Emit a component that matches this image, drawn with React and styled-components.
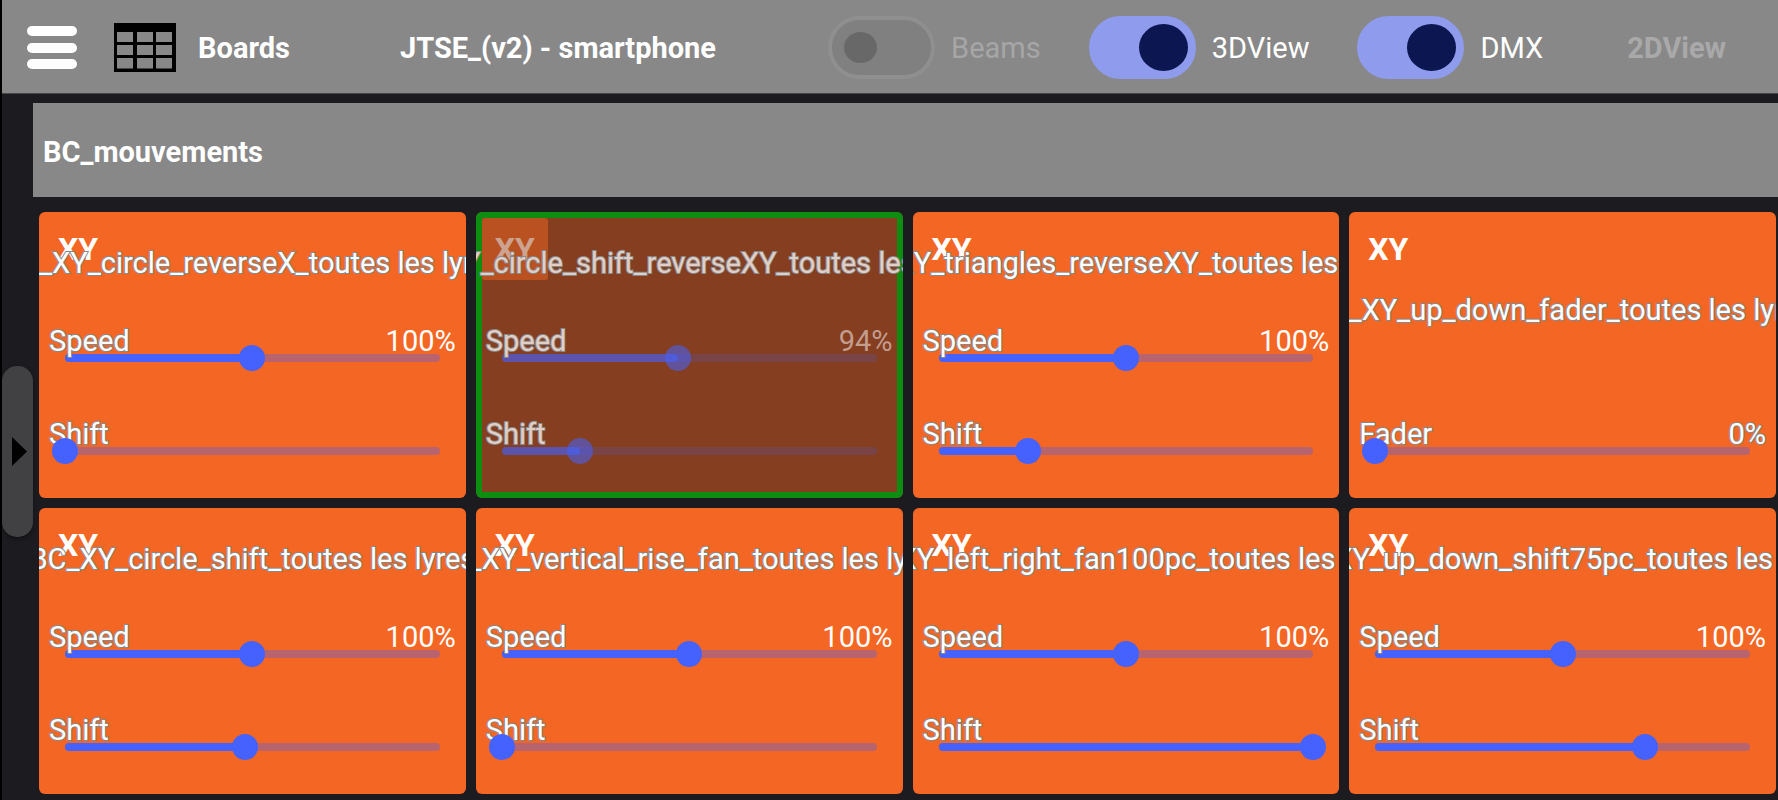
import React, { useId, useState } from "react";
import styled, { createGlobalStyle, css } from "styled-components";

const GlobalStyle = createGlobalStyle`
  * { box-sizing: border-box; }
  body {
    margin: 0;
    background: #1c1b20;
    color: #fff;
    font-family: Roboto, "Liberation Sans", sans-serif;
    font-size: 29px;
    line-height: 34px;
  }
  button, input { font: inherit; color: inherit; margin: 0; }
`;

const Page = styled.div`
  display: flex;
  flex-direction: column;
  min-height: 100vh;
  border-left: 2px solid #000;
  overflow: hidden;
`;

const TopBar = styled.header`
  display: flex;
  align-items: center;
  height: 94px;
  padding: 2px 52px 0 25px;
  background: #888;
  border-bottom: 1px solid #48484a;
  white-space: nowrap;
`;

const BarButton = styled.button`
  display: flex;
  align-items: center;
  gap: 22px;
  padding: 0;
  border: 0;
  background: none;
  font-weight: 700;
  cursor: pointer;

  &:disabled {
    color: #a9a9a9;
    cursor: default;
  }
`;

const BoardsButton = styled(BarButton)`
  margin-left: 37px;
`;

const ProjectName = styled.h1`
  margin: 0 0 0 110px;
  font-size: inherit;
  font-weight: 700;
`;

const Controls = styled.div`
  display: flex;
  align-items: center;
  gap: 48px;
  margin-left: auto;
`;

const View2D = styled(BarButton)`
  margin-left: 36px;
`;

const SwitchLabel = styled.label`
  display: flex;
  align-items: center;
  gap: 16px;
  color: ${(p) => (p.$off ? "#a6a6a6" : "#fff")};
`;

const SwitchInput = styled.input`
  appearance: none;
  display: flex;
  align-items: center;
  justify-content: flex-start;
  width: 107px;
  height: 63px;
  padding: 0 12px;
  border: 4px solid #8f8f8f;
  border-radius: 32px;
  background: #808080;

  &::before {
    content: "";
    width: 33px;
    height: 31px;
    border-radius: 50%;
    background: #686868;
  }

  &:checked {
    justify-content: flex-end;
    padding: 0 4px;
    border-color: #8f9bec;
    background: #8f9bec;
  }

  &:checked::before {
    width: 49px;
    height: 47px;
    background: #0c1752;
  }
`;

const Body = styled.div`
  display: flex;
  flex: 1;
  padding-top: 9px;
`;

const Rail = styled.aside`
  display: flex;
  align-items: center;
  flex: 0 0 31px;
`;

const RailHandle = styled.button`
  display: flex;
  align-items: center;
  justify-content: center;
  width: 31px;
  height: 171px;
  padding: 0 0 0 3px;
  border: 0;
  border-radius: 15px;
  background: #414143;
  box-shadow: 0 2px 4px rgba(0, 0, 0, 0.4);
`;

const Board = styled.main`
  flex: 1;
  min-width: 0;
`;

const BoardName = styled.h2`
  display: flex;
  align-items: center;
  height: 94px;
  margin: 0 0 15px;
  padding: 3px 10px 0;
  background: #888;
  font-size: inherit;
  font-weight: 700;
`;

const CardGrid = styled.div`
  display: grid;
  grid-template-columns: repeat(4, minmax(0, 1fr));
  gap: 10px;
  padding: 0 2px 6px 6px;
`;

const outlined = css`
  -webkit-text-stroke: 2px #84898c;
  paint-order: stroke fill;
`;

const Card = styled.section`
  --fg: ${(p) => (p.$active ? "#e3cec6" : "#fff")};
  --value: ${(p) => (p.$active ? "#c39d8e" : "#fff")};
  --icon: ${(p) => (p.$active ? "#cda28f" : "#fff")};
  --bar: ${(p) => (p.$active ? "rgba(69, 98, 255, 0.55)" : "#4562ff")};
  --rest: rgba(69, 98, 255, ${(p) => (p.$active ? 0.18 : 0.35)});
  display: flex;
  flex-direction: column;
  min-height: 286px;
  border-radius: 6px;
  overflow: hidden;
  background: ${(p) => (p.$active ? "#853e20" : "#f46623")};
  box-shadow: ${(p) => (p.$active ? "inset 0 0 0 6px #0e8e11" : "none")};
`;

const CardHead = styled.div`
  display: grid;
  flex: 1;
  min-height: 100px;
  padding-top: 2px;

  > * { grid-area: 1 / 1; }
`;

const Kind = styled.span`
  display: flex;
  align-items: center;
  justify-content: center;
  width: 66px;
  height: 62px;
  margin: 4px 6px;
  border-radius: 3px;
  background: ${(p) => (p.$active ? "#b95120" : "transparent")};
  color: var(--icon);
  font-size: 32px;
  font-weight: 700;
`;

const CardTitle = styled.h3`
  display: flex;
  align-items: center;
  justify-content: center;
  min-width: 0;
  margin: 0;
  color: var(--fg);
  font-size: inherit;
  font-weight: 400;
  white-space: nowrap;
  ${outlined}
`;

const SliderRow = styled.div`
  display: grid;
  height: 93px;
  padding-top: 12px;
  align-items: start;

  > * { grid-area: 1 / 1; }
`;

const Track = styled.div`
  height: 8px;
  margin: 30px 26px 0;
  border-radius: 4px;
  background: var(--rest);
`;

const Fill = styled.div`
  height: 8px;
  border-radius: 4px;
  background: var(--bar);
`;

const Caption = styled.div`
  display: flex;
  justify-content: space-between;
  padding: 0 10px;
`;

const Name = styled.label`
  color: var(--fg);
  ${outlined}
`;

const Value = styled.output`
  color: var(--value);
  ${(p) => p.$outlined && outlined}
`;

const Range = styled.input`
  appearance: none;
  width: auto;
  height: 26px;
  margin: 21px 13px 0;
  background: transparent;

  &::-webkit-slider-thumb {
    appearance: none;
    width: 26px;
    height: 26px;
    border-radius: 50%;
    background: var(--bar);
  }
`;

const MenuIcon = () => (
  <svg width="50" height="44" viewBox="0 0 50 44" aria-hidden="true">
    <g fill="#fff">
      <rect y="0" width="50" height="10" rx="5" />
      <rect y="17" width="50" height="10" rx="5" />
      <rect y="33" width="50" height="10" rx="5" />
    </g>
  </svg>
);

const TableIcon = () => (
  <svg width="62" height="49" viewBox="0 0 62 49" aria-hidden="true">
    <path
      fillRule="evenodd"
      d="M0 0H62V49H0Z M3 9V19H19V9Z M23 9V19H39V9Z M42 9V19H58V9Z M3 22V32H19V22Z M23 22V32H39V22Z M42 22V32H58V22Z M3 35V45.500H19V35Z M23 35V45.500H39V35Z M42 35V45.500H58V35Z"
    />
  </svg>
);

const ArrowIcon = () => (
  <svg width="15" height="29" viewBox="0 0 15 29" aria-hidden="true">
    <path d="M0 0L15 14.500L0 29Z" />
  </svg>
);

function Switch({ label, defaultChecked, disabled }) {
  return (
    <SwitchLabel $off={disabled}>
      <SwitchInput type="checkbox" role="switch" defaultChecked={defaultChecked} disabled={disabled} />
      {label}
    </SwitchLabel>
  );
}

function Slider({ label, initial, max = 100, showValue, outlineValue }) {
  const id = useId();
  const [value, setValue] = useState(initial);
  return (
    <SliderRow>
      <Track>
        <Fill style={{ width: `${(value / max) * 100}%` }} />
      </Track>
      <Caption>
        <Name htmlFor={id}>{label}</Name>
        {showValue && <Value htmlFor={id} $outlined={outlineValue}>{value}%</Value>}
      </Caption>
      <Range id={id} type="range" min="0" max={max} value={value} onChange={(e) => setValue(Number(e.target.value))} />
    </SliderRow>
  );
}

const EFFECTS = [
  { name: "BC_XY_circle_reverseX_toutes les lyres", speed: 100, shift: 0 },
  { name: "BC_XY_circle_shift_reverseXY_toutes les lyres", speed: 94, shift: 21, active: true },
  { name: "BC_XY_triangles_reverseXY_toutes les lyres", speed: 100, shift: 24 },
  { name: "BC_XY_up_down_fader_toutes les lyres", fader: 0 },
  { name: "BC_XY_circle_shift_toutes les lyres", speed: 100, shift: 48 },
  { name: "BC_XY_vertical_rise_fan_toutes les lyres", speed: 100, shift: 0 },
  { name: "BC_XY_left_right_fan100pc_toutes les lyres", speed: 100, shift: 100 },
  { name: "BC_XY_up_down_shift75pc_toutes les lyres", speed: 100, shift: 72 },
];

function EffectCard({ effect }) {
  const { name, speed, shift, fader, active } = effect;
  return (
    <Card $active={active}>
      <CardHead>
        <Kind $active={active}>XY</Kind>
        <CardTitle>{name}</CardTitle>
      </CardHead>
      {fader === undefined ? (
        <>
          <Slider label="Speed" initial={speed} max={200} showValue />
          <Slider label="Shift" initial={shift} />
        </>
      ) : (
        <Slider label="Fader" initial={fader} showValue outlineValue />
      )}
    </Card>
  );
}

export default function App() {
  return (
    <>
      <GlobalStyle />
      <Page>
        <TopBar>
          <BarButton aria-label="Menu">
            <MenuIcon />
          </BarButton>
          <BoardsButton>
            <TableIcon />
            Boards
          </BoardsButton>
          <ProjectName>JTSE_(v2) - smartphone</ProjectName>
          <Controls>
            <Switch label="Beams" disabled />
            <Switch label="3DView" defaultChecked />
            <Switch label="DMX" defaultChecked />
            <View2D disabled>2DView</View2D>
          </Controls>
        </TopBar>
        <Body>
          <Rail>
            <RailHandle aria-label="Open panel">
              <ArrowIcon />
            </RailHandle>
          </Rail>
          <Board>
            <BoardName>BC_mouvements</BoardName>
            <CardGrid>
              {EFFECTS.map((effect) => (
                <EffectCard key={effect.name} effect={effect} />
              ))}
            </CardGrid>
          </Board>
        </Body>
      </Page>
    </>
  );
}
